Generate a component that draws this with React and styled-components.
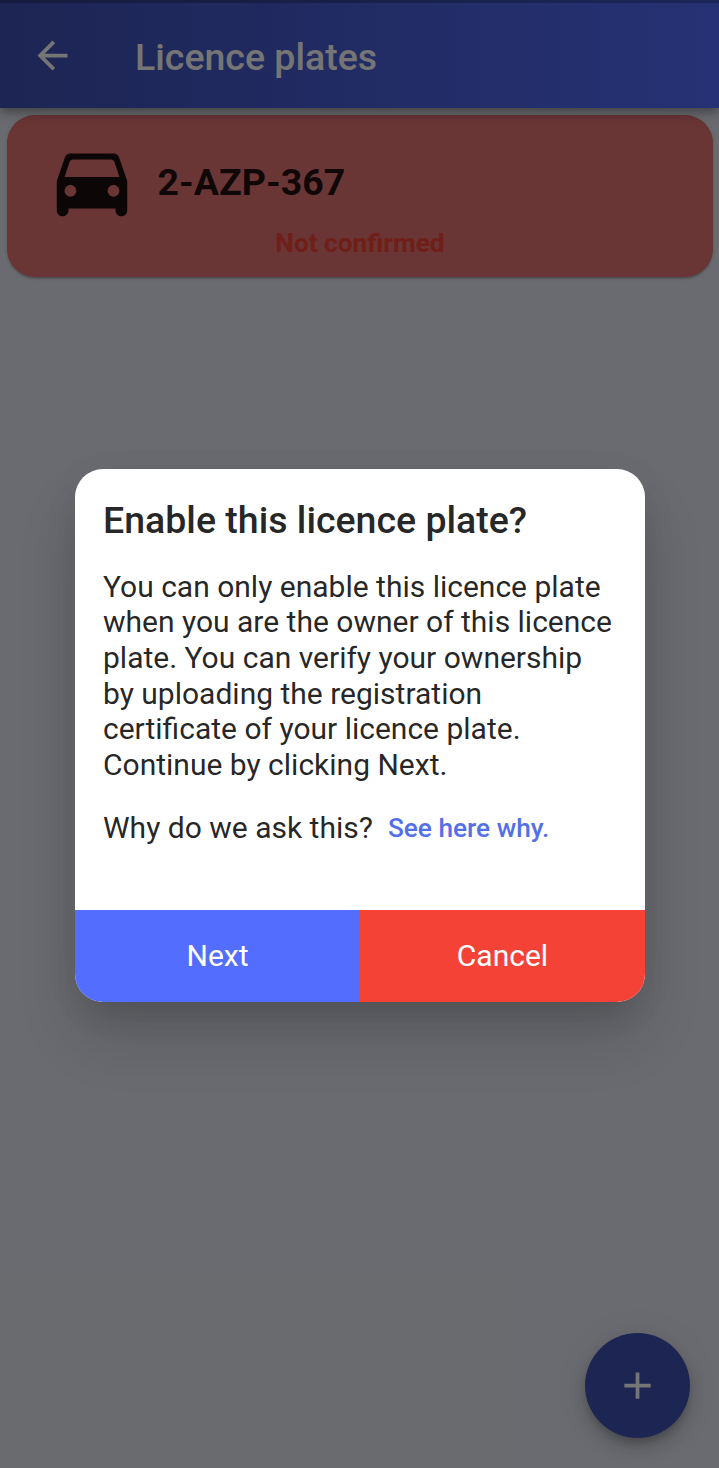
import React from "react";
import styled, { createGlobalStyle } from "styled-components";

const GlobalStyle = createGlobalStyle`
  * { box-sizing: border-box; }
  body {
    margin: 0;
    background: #e6e9f3;
    font-family: Roboto, "Liberation Sans", sans-serif;
  }
  button { font: inherit; border: 0; margin: 0; cursor: pointer; }
  h1, h2, p { margin: 0; }
`;

const Screen = styled.div`
  position: relative;
  display: flex;
  flex-direction: column;
  width: 719px;
  height: 1468px;
  overflow: hidden;
  background: #e6e9f3;
`;

const StatusStrip = styled.div`
  height: 3px;
  background: rgba(0, 0, 0, 0.25);
`;

const AppBar = styled.header`
  position: relative;
  z-index: 1;
  flex: none;
  height: 108px;
  background: linear-gradient(90deg, #3f51b5, #536dfe);
  box-shadow: 0 4px 7px -2px rgba(0, 0, 0, 0.2), 0 7px 9px rgba(0, 0, 0, 0.14),
    0 2px 19px rgba(0, 0, 0, 0.12);
`;

const Toolbar = styled.div`
  display: flex;
  align-items: center;
  height: 105px;
  padding-left: 30px;
  gap: 60px;
  color: #fff;
`;

const BackButton = styled.button`
  display: flex;
  padding: 0;
  background: none;
  color: inherit;
`;

const Title = styled.h1`
  padding-top: 3px;
  font-size: 37.5px;
  font-weight: 500;
  line-height: 44px;
`;

const PlateCard = styled.article`
  flex: none;
  height: 162px;
  margin: 7px 6px 0 7px;
  padding: 19px 38px 0;
  border-radius: 28px;
  background: #e57373;
  box-shadow: 0 3px 2px -2px rgba(0, 0, 0, 0.16), 0 2px 2px rgba(0, 0, 0, 0.1),
    0 1px 4px rgba(0, 0, 0, 0.1);
`;

const PlateRow = styled.div`
  display: flex;
  align-items: center;
  gap: 18.5px;
  height: 94px;
  color: rgba(0, 0, 0, 0.87);
`;

const PlateNumber = styled.h2`
  padding-top: 2px;
  font-size: 37.5px;
  font-weight: 700;
  line-height: 44px;
`;

const PlateStatus = styled.p`
  color: #f44336;
  font-size: 26.25px;
  font-weight: 700;
  line-height: 30px;
  text-align: center;
`;

const AddButton = styled.button`
  position: absolute;
  right: 29px;
  bottom: 30px;
  display: grid;
  place-items: center;
  width: 105px;
  height: 105px;
  padding: 0;
  border-radius: 50%;
  background: #3f51b5;
  color: #fff;
  box-shadow: 0 6px 9px -2px rgba(0, 0, 0, 0.2), 0 11px 19px rgba(0, 0, 0, 0.14),
    0 2px 34px rgba(0, 0, 0, 0.08);
`;

const Scrim = styled.div`
  position: absolute;
  inset: 0;
  z-index: 2;
  display: flex;
  align-items: center;
  justify-content: center;
  padding: 3px 0 0 1px;
  background: rgba(0, 0, 0, 0.54);
`;

const Dialog = styled.section`
  display: flex;
  flex-direction: column;
  width: 570px;
  height: 533px;
  overflow: hidden;
  border-radius: 28px;
  background: #fff;
  color: rgba(0, 0, 0, 0.87);
  box-shadow: 0 21px 36px -13px rgba(0, 0, 0, 0.1), 0 36px 60px 0 rgba(0, 0, 0, 0.14),
    0 8px 44px 0 rgba(0, 0, 0, 0.04);
`;

const DialogBody = styled.div`
  flex: 1;
  padding: 29px 28px 0;
`;

const DialogTitle = styled.h2`
  font-size: 37.5px;
  font-weight: 500;
  line-height: 44px;
`;

const Message = styled.p`
  margin-top: 26.8px;
  font-size: 30px;
  line-height: 35.6px;
  white-space: nowrap;
`;

const Question = styled.div`
  display: flex;
  align-items: center;
  gap: 15px;
  margin-top: 27.2px;
  font-size: 30px;
  line-height: 36px;
`;

const Link = styled.a`
  color: #5470e8;
  font-size: 26.25px;
  font-weight: 500;
`;

const Actions = styled.div`
  display: flex;
  height: 92px;
`;

const Action = styled.button`
  flex: 1;
  padding: 0 0 2px;
  background: ${(p) => (p.$danger ? "#f44336" : "#536dfe")};
  color: #fff;
  font-size: 30px;
`;

const Icon = ({ size, d }) => (
  <svg width={size} height={size} viewBox="0 0 24 24" fill="currentColor" aria-hidden="true">
    <path d={d} />
  </svg>
);

const BACK = "M20 11H7.83l5.59-5.59L12 4l-8 8 8 8 1.41-1.41L7.83 13H20v-2z";
const PLUS = "M19 13h-6v6h-2v-6H5v-2h6V5h2v6h6v2z";
const CAR =
  "M18.92 6.01C18.72 5.42 18.16 5 17.5 5h-11c-.66 0-1.21.42-1.42 1.01l-1.97 5.67c-.07.21-.11.43-.11.66v7.16c0 .83.67 1.5 1.5 1.5S6 20.33 6 19.5V19h12v.5c0 .82.67 1.5 1.5 1.5.82 0 1.5-.67 1.5-1.5v-7.16c0-.22-.04-.45-.11-.66l-1.97-5.67zM6.5 16c-.83 0-1.5-.67-1.5-1.5S5.67 13 6.5 13s1.5.67 1.5 1.5S7.33 16 6.5 16zm11 0c-.83 0-1.5-.67-1.5-1.5s.67-1.5 1.5-1.5 1.5.67 1.5 1.5-.67 1.5-1.5 1.5zM5 11l1.27-3.82c.14-.4.52-.68.95-.68h9.56c.43 0 .81.28.95.68L19 11H5z";

export default function App() {
  return (
    <>
      <GlobalStyle />
      <Screen>
        <AppBar>
          <StatusStrip />
          <Toolbar>
            <BackButton aria-label="Back">
              <Icon size={45} d={BACK} />
            </BackButton>
            <Title>Licence plates</Title>
          </Toolbar>
        </AppBar>
        <PlateCard>
          <PlateRow>
            <Icon size={94} d={CAR} />
            <PlateNumber>2-AZP-367</PlateNumber>
          </PlateRow>
          <PlateStatus>Not confirmed</PlateStatus>
        </PlateCard>
        <AddButton aria-label="Add licence plate">
          <Icon size={45} d={PLUS} />
        </AddButton>
        <Scrim>
          <Dialog role="dialog">
            <DialogBody>
              <DialogTitle>Enable this licence plate?</DialogTitle>
              <Message>
                You can only enable this licence plate
                <br />
                when you are the owner of this licence
                <br />
                plate. You can verify your ownership
                <br />
                by uploading the registration
                <br />
                certificate of your licence plate.
                <br />
                Continue by clicking Next.
              </Message>
              <Question>
                <span>Why do we ask this?</span>
                <Link>See here why.</Link>
              </Question>
            </DialogBody>
            <Actions>
              <Action>Next</Action>
              <Action $danger>Cancel</Action>
            </Actions>
          </Dialog>
        </Scrim>
      </Screen>
    </>
  );
}
